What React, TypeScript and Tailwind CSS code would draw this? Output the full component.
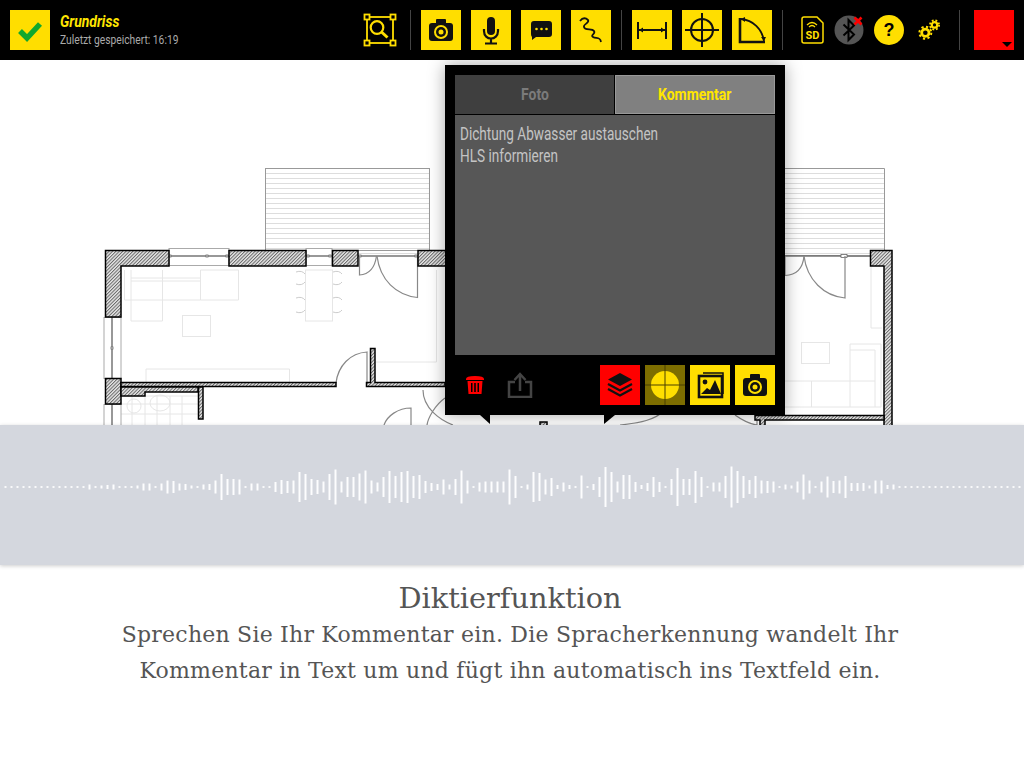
import React from 'react';

const NARROW = "font-['Roboto',sans-serif]";

const WAVE = [
  2, 2, 2, 2, 2, 2, 2, 2, 2, 2, 2, 2, 2, 2, 5, 2, 3, 4, 5, 2, 2, 2, 3, 7, 7, 2, 7, 13, 12, 7, 6, 3, 2, 5, 6, 13, 26, 16,
  16, 15, 2, 7, 7, 2, 2, 10, 14, 12, 13, 30, 26, 16, 14, 11, 26, 35, 11, 20, 20, 27, 33, 13, 9, 20, 32, 22, 30, 32, 22, 24,
  12, 8, 6, 15, 5, 16, 33, 13, 2, 9, 11, 11, 11, 11, 35, 22, 2, 5, 30, 28, 15, 18, 4, 9, 4, 2, 23, 2, 6, 20, 40, 30, 11, 24,
  24, 10, 4, 8, 20, 10, 2, 16, 38, 16, 16, 32, 20, 2, 9, 9, 22, 41, 32, 22, 14, 22, 13, 12, 11, 2, 5, 3, 11, 25, 13, 2, 11,
  21, 12, 13, 22, 8, 8, 8, 3, 13, 13, 4, 5,
];

const BARS = Array.from({ length: 170 }, (_, i) => WAVE[i] ?? 2);
const STRIPES = Array.from({ length: 17 }, (_, i) => 173 + i * 5);

const Tool = ({ children, className = 'bg-[#ffde00]' }: { children: React.ReactNode; className?: string }) => (
  <div className={`w-10 h-10 shrink-0 ${className}`}>
    <svg viewBox="0 0 40 40" className="w-10 h-10">
      {children}
    </svg>
  </div>
);

const Divider = () => <div className="w-px h-10 bg-[#444] shrink-0" />;

const CameraGlyph = () => (
  <g>
    <rect x="15" y="9" width="10" height="6" rx="1" fill="#111" />
    <rect x="8" y="13" width="24" height="18" rx="3" fill="#111" />
    <circle cx="20" cy="22" r="7" fill="#ffde00" />
    <circle cx="20" cy="22" r="5" fill="#111" />
    <circle cx="20" cy="22" r="2.5" fill="#ffde00" />
  </g>
);

const Header = () => (
  <header className="h-[60px] bg-black flex items-center pl-[10px] relative z-20">
    <Tool>
      <path d="M10 21 L17 28 L30 14" fill="none" stroke="#10a82e" strokeWidth="5.5" />
    </Tool>
    <div className={`ml-[10px] w-[292px] shrink-0 ${NARROW}`}>
      <div className="text-[17px] leading-[20px] font-bold italic text-[#ffe600] origin-left scale-x-[0.82]">Grundriss</div>
      <div className="text-[13px] leading-[18px] text-[#aaa] origin-left scale-x-[0.79] whitespace-nowrap">Zuletzt gespeichert: 16:19</div>
    </div>
    <svg viewBox="0 0 34 34" className="ml-[11px] w-[34px] h-[34px] shrink-0 mr-[13px]" fill="none" stroke="#ffde00" strokeWidth="1.8">
      <rect x="4" y="4" width="26" height="26" />
      <rect x="1.5" y="1.5" width="5" height="5" fill="#000" />
      <rect x="27.5" y="1.5" width="5" height="5" fill="#000" />
      <rect x="1.5" y="27.5" width="5" height="5" fill="#000" />
      <rect x="27.5" y="27.5" width="5" height="5" fill="#000" />
      <circle cx="14" cy="14.5" r="6.3" strokeWidth="2.2" />
      <path d="M18.5 19 L24.5 24.5" strokeWidth="3" />
    </svg>
    <Divider />
    <div className="flex gap-[10px] ml-[10px]">
      <Tool>
        <CameraGlyph />
      </Tool>
      <Tool>
        <rect x="16" y="7" width="8" height="18" rx="4" fill="#111" />
        <path d="M13 19 V21 C13 31 27 31 27 21 V19 M20 28 V33 M14 33.5 H26" fill="none" stroke="#111" strokeWidth="2.2" />
      </Tool>
      <Tool>
        <path d="M13 11 H28 Q31 11 31 14 V24 Q31 27 28 27 H15 L11 30 V27 Q10 26 10 24 V14 Q10 11 13 11 Z" fill="#111" />
        <circle cx="15.5" cy="19" r="1.3" fill="#ffde00" />
        <circle cx="20.5" cy="19" r="1.3" fill="#ffde00" />
        <circle cx="25.5" cy="19" r="1.3" fill="#ffde00" />
      </Tool>
      <Tool>
        <path d="M9 11 C12 7 15 8 17 10 C19 13 12 14 13 17 C14 21 21 18 23 21 C25 24 19 25 22 27 C25 29 29 26 30 32" fill="none" stroke="#111" strokeWidth="1.8" />
      </Tool>
    </div>
    <div className="ml-[10px]">
      <Divider />
    </div>
    <div className="flex gap-[10px] ml-[10px]">
      <Tool>
        <path d="M6 12 V29 M34 12 V29 M6 20 H34" fill="none" stroke="#111" strokeWidth="2" />
        <path d="M7 20 L11 17.5 V22.5 Z M33 20 L29 17.5 V22.5 Z" fill="#111" />
      </Tool>
      <Tool>
        <circle cx="20" cy="20" r="11" fill="none" stroke="#111" strokeWidth="2" />
        <path d="M20 3 V37 M3 20 H37" stroke="#111" strokeWidth="2" />
      </Tool>
      <Tool>
        <path d="M8 8 V32 H33" fill="none" stroke="#111" strokeWidth="2.6" />
        <path d="M9 9 C21 10 30 19 32 31" fill="none" stroke="#111" strokeWidth="1.8" />
        <path d="M9 9 L13 7 L13 12 Z M32 31 L29 27 L34 27 Z" fill="#111" />
      </Tool>
    </div>
    <div className="ml-[10px]">
      <Divider />
    </div>
    <svg viewBox="0 0 24 28" className="ml-[17px] w-6 h-7 shrink-0">
      <path d="M2 3 Q2 1 4 1 H17 L23 7 V25 Q23 27 21 27 H4 Q2 27 2 25 Z" fill="none" stroke="#ffde00" strokeWidth="1.5" />
      <path d="M7 9 Q12 4 17 9 M9 11 Q12 8 15 11" fill="none" stroke="#ffde00" strokeWidth="1.3" />
      <text x="12.5" y="23" textAnchor="middle" fontFamily="Roboto, sans-serif" fontWeight="700" fontSize="11" fill="#ffde00">
        SD
      </text>
    </svg>
    <svg viewBox="0 0 30 30" className="ml-[10px] w-[30px] h-[30px] shrink-0">
      <circle cx="15" cy="15" r="14.5" fill="#555" />
      <path d="M9.5 9.5 L20 19.5 L14.5 25 V5 L20 10.5 L9.5 20.5" fill="none" stroke="#000" strokeWidth="2" />
      <path d="M20.5 2.5 L27.5 9.5 M27.5 2.5 L20.5 9.5" stroke="#f00" strokeWidth="2.6" />
    </svg>
    <div className="ml-[10px] w-[30px] h-[30px] rounded-full bg-[#ffde00] flex items-center justify-center shrink-0 font-['Liberation_Sans',sans-serif] text-[18px] font-bold text-black">
      ?
    </div>
    <svg viewBox="0 0 24 24" className="ml-[14px] w-[22px] h-[22px] shrink-0" fill="none" stroke="#ffde00">
      <circle cx="8" cy="15" r="4" strokeWidth="3" />
      <circle cx="8" cy="15" r="6.5" strokeWidth="2.2" strokeDasharray="2.4 2.7" />
      <circle cx="18" cy="6.5" r="3" strokeWidth="2.4" />
      <circle cx="18" cy="6.5" r="5" strokeWidth="2" strokeDasharray="2 2" />
    </svg>
    <div className="ml-[19px]">
      <Divider />
    </div>
    <div className="ml-[14px] w-10 h-10 bg-[#f00] relative shrink-0">
      <div className="absolute right-[2px] bottom-[3px] w-0 h-0 border-x-[5.5px] border-x-transparent border-t-[5px] border-t-black" />
    </div>
  </header>
);

const FloorPlan = () => (
  <svg viewBox="0 60 1024 365" className="block w-[1024px] h-[365px]">
    <defs>
      <pattern id="hatch" width="2.4" height="2.4" patternUnits="userSpaceOnUse" patternTransform="rotate(-45)">
        <rect width="2.4" height="2.4" fill="#e8e8e8" />
        <rect width="2.4" height="1" fill="#666" />
      </pattern>
    </defs>
    {/* terraces */}
    <rect x="265.5" y="168.5" width="164" height="82" fill="#fff" stroke="#999" />
    {STRIPES.map((y) => (
      <path key={y} d={`M266 ${y + 0.5} H429`} stroke="#ddd" />
    ))}
    <path d="M780 168.5 H884.5 V250" fill="none" stroke="#999" />
    {STRIPES.map((y) => (
      <path key={y} d={`M780 ${y + 0.5} H884`} stroke="#ddd" />
    ))}
    {/* furniture */}
    <g fill="none" stroke="#e6e6e6">
      <path d="M124.5 270 V300 H162.5 V321 H131 V270 M162.5 270 V300 H200.5 V270 M200.5 270 H238.5 V300 H200.5 M131 278 H200 M131 281 H200" />
      <rect x="182.5" y="315.5" width="28" height="21" />
      <rect x="305.5" y="270" width="27" height="51" />
      <path d="M146 369 H289.5 V382 M146 369 V382" />
      <path d="M376 362 H436.5 V270" />
      <path d="M296 272 q6 -2 9 2 M296 284 q6 2 9 -2 M296 298 q6 -2 9 2 M296 312 q6 2 9 -2 M333 272 q6 -2 9 2 M333 284 q6 2 9 -2 M333 298 q6 -2 9 2 M333 312 q6 2 9 -2" stroke="#ccc" />
      <path d="M121 396 H198 M121 404 H198 M121 414 H198 M132 396 V425 M145 396 V425 M157 396 V425 M170 396 V425 M182 396 V425" />
      <circle cx="134" cy="406" r="7" />
      <ellipse cx="160" cy="403" rx="10" ry="8" />
      <rect x="801.5" y="342.5" width="28" height="21" />
      <path d="M871 267 V328 H882 M850 344 H881 V407 H785 M850 344 V407 M785 381 H875 M811.5 381 V407 M850 350 H875 V407" />
    </g>
    {/* windows */}
    <g fill="none" stroke="#aaa">
      <rect x="169" y="248.5" width="60" height="17" fill="#fff" />
      <rect x="306" y="248.5" width="26" height="17" fill="#fff" />
      <rect x="104" y="317.5" width="17" height="61" fill="#fff" />
      <rect x="104" y="404.5" width="17" height="30" fill="#fff" />
      <path d="M840 256.5 H870 M785 255.5 H870" stroke="#888" />
    </g>
    <path d="M169 256 H229 M306 256 H332 M358 256 H418 M785 256 H840 M112 317 V378 M112 404 V425" stroke="#777" strokeWidth="1.5" />
    <g fill="#fff" stroke="#666" strokeWidth="0.8">
      <rect x="169" y="255" width="2" height="2" />
      <rect x="206" y="255" width="2" height="2" />
      <rect x="226" y="255" width="2" height="2" />
      <rect x="307" y="255" width="2" height="2" />
      <rect x="329" y="255" width="2" height="2" />
      <rect x="359" y="255" width="2" height="2" />
      <rect x="415" y="255" width="2" height="2" />
      <rect x="841" y="254.5" width="6" height="3" />
      <rect x="111" y="347" width="2" height="2" />
    </g>
    {/* doors */}
    <g fill="none" stroke="#888" strokeWidth="1.2">
      <path d="M359.5 256 V275 Q374 274 376.5 256" />
      <path d="M417.5 256 V297.5 C396 295 380 280 377 256" />
      <path d="M367 383 V352 C350 353 338 366 336 383" />
      <path d="M785 256 V275.5 C798 275 803 267 804 256" />
      <path d="M845 256 V298 C824 296 807 280 804 256" />
      <path d="M411 425 V408 C398 408 387 416 384 425" />
      <path d="M423 390 C423 408 440 420 453 425 M445 398 C435 405 428 418 427 425" />
      <path d="M620 425 C640 423 655 420 665 410 M735 415 C742 420 750 424 757 425 M757 410 V425" />
    </g>
    {/* walls */}
    <g fill="url(#hatch)" stroke="#000" strokeWidth="1.5">
      <path d="M105.5 250.5 H169 V266 H121 V317 H105.5 Z" />
      <rect x="229" y="250.5" width="77" height="15.5" />
      <rect x="332.5" y="250.5" width="25.5" height="15.5" />
      <rect x="418" y="250.5" width="40" height="15.5" />
      <path d="M870.5 250.5 H892 V430 H884 V266 H870.5 Z" />
      <rect x="105.5" y="378.5" width="15.5" height="25.5" />
      <path d="M121 382.5 H336 V386.5 H121 Z" />
      <path d="M370.5 348.5 H375 V382.5 H445 V386.5 H366.5 V382.5 H370.5 Z" />
      <path d="M121 387 H198.5 V419 H203 V387 H198 V392 H145 V396 H121 Z" />
      <path d="M755 415.5 H884 V420 H765 V430 H760 V420 H755 Z" />
      <rect x="540" y="422" width="7" height="6" />
    </g>
  </svg>
);

const Popover = () => (
  <div className="absolute left-[445px] top-[5px] w-[340px] h-[350px] bg-black p-[10px] shadow-[0_0_16px_rgba(0,0,0,0.35)] flex flex-col z-10">
    <div className={`flex h-[39px] shrink-0 text-[17px] font-bold ${NARROW}`}>
      <div className="w-[159px] bg-[#3f3f3f] text-[#7b7b7b] flex items-center justify-center">
        <span className="scale-x-[0.82]">Foto</span>
      </div>
      <div className="ml-px flex-1 bg-[#808080] text-[#ffe600] border border-[#999] flex items-center justify-center">
        <span className="scale-x-[0.82]">Kommentar</span>
      </div>
    </div>
    <div className={`mt-px flex-1 bg-[#575757] px-[5px] pt-[8px] text-[18px] leading-[22px] text-[#c4c4c4] ${NARROW}`}>
      <div className="origin-left scale-x-[0.755] whitespace-nowrap">Dichtung Abwasser austauschen</div>
      <div className="origin-left scale-x-[0.755] whitespace-nowrap">HLS informieren</div>
    </div>
    <div className="mt-[10px] h-10 shrink-0 flex items-center">
      <svg viewBox="0 0 20 20" className="ml-[10px] w-5 h-5 shrink-0" fill="#f00">
        <path d="M1 4 Q1 1 10 1 Q19 1 19 4 V5 H1 Z" />
        <path d="M2.5 6 H17.5 L16.5 19 H3.5 Z M6 8 V17 H7.5 V8 Z M9.2 8 V17 H10.8 V8 Z M12.5 8 V17 H14 V8 Z" fillRule="evenodd" />
      </svg>
      <svg viewBox="0 0 26 26" className="ml-[22px] w-[26px] h-[26px] shrink-0" fill="none" stroke="#444" strokeWidth="2.5">
        <path d="M8 10 H2 V25 H24 V10 H18 M13 19 V3 M7.5 8 L13 2 L18.5 8" />
      </svg>
      <div className="ml-auto flex gap-[5px]">
        <Tool className="bg-[#f00]">
          <path d="M20 8 L32 14.5 L20 21 L8 14.5 Z" fill="#111" />
          <path d="M8 19 L20 25.5 L32 19 M8 24 L20 30.5 L32 24" fill="none" stroke="#111" strokeWidth="2.2" />
        </Tool>
        <Tool className="bg-[#7d6d00]">
          <circle cx="20" cy="20" r="14" fill="#ffde00" />
          <path d="M20 0 V40 M0 20 H40" stroke="#4a4000" strokeWidth="1" />
        </Tool>
        <Tool>
          <path d="M13 8 H33 V29" fill="none" stroke="#111" strokeWidth="1.5" />
          <rect x="9" y="11" width="23" height="21" fill="none" stroke="#111" strokeWidth="2.6" />
          <circle cx="15" cy="17" r="2.4" fill="#111" />
          <path d="M11 29 L17 23 L20 25 L25 15 L31 29 Z" fill="#111" />
        </Tool>
        <Tool>
          <CameraGlyph />
        </Tool>
      </div>
    </div>
    <div className="absolute left-[35px] top-full w-0 h-0 border-l-[10px] border-l-transparent border-t-[9px] border-t-black" />
    <div className="absolute left-[159px] top-full w-0 h-0 border-r-[11px] border-r-transparent border-t-[9px] border-t-black" />
  </div>
);

const Waveform = () => (
  <section className="h-[140px] bg-[#d4d7de] shadow-[0_1px_4px_rgba(0,0,0,0.2)] relative z-20 flex items-center">
    <svg viewBox="0 0 1024 140" className="block w-[1024px] h-[140px]">
      {BARS.map((h, i) => (
        <rect key={i} x={4.5 + i * 6} y={62 - h / 2} width="2" height={h} fill="#fff" opacity={h <= 2 ? 0.85 : 0.95} />
      ))}
    </svg>
  </section>
);

export default function App() {
  return (
    <div className="w-[1024px] h-[768px] bg-white overflow-hidden flex flex-col">
      <Header />
      <main className="relative h-[365px] shrink-0">
        <FloorPlan />
        <Popover />
      </main>
      <Waveform />
      <section className="flex-1 pt-[15px] pr-[4px] text-center text-[#555] font-['DejaVu_Serif',serif]">
        <h1 className="text-[28.8px] leading-[37px]">Diktierfunktion</h1>
        <p className="text-[22px] leading-[36px] tracking-[0.22px] whitespace-nowrap">
          Sprechen Sie Ihr Kommentar ein. Die Spracherkennung wandelt Ihr
          <br />
          Kommentar in Text um und fügt ihn automatisch ins Textfeld ein.
        </p>
      </section>
    </div>
  );
}
